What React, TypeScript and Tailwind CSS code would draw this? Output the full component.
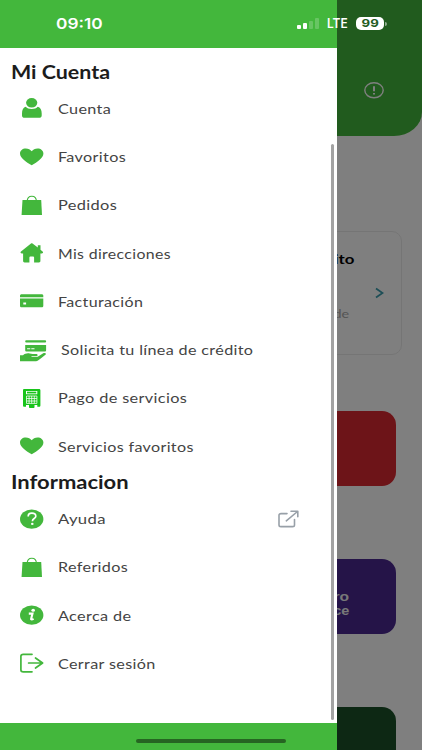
import type { ReactNode } from 'react'

type Item = { label: string; icon: ReactNode; fit: string; indent?: boolean; external?: boolean }

const Icon = ({ children, className = 'text-[#43b73c]' }: { children: ReactNode; className?: string }) => (
  <svg viewBox="0 0 30 24" fill="currentColor" className={`w-[30px] h-6 shrink-0 ${className}`}>
    {children}
  </svg>
)

const person = (
  <Icon>
    <ellipse cx="14.7" cy="6.8" rx="5.6" ry="4.8" />
    <path d="M8.8 10.8C10 12.200 12 13 14.7 13s4.800-.8 6-2.200c2.600.7 4 3.200 4 6.800v1.800c0 1.700-1 2.400-2.800 2.400H7.700C6 21.800 5 21.100 5 19.400v-1.800c0-3.600 1.300-6.100 3.800-6.800z" />
  </Icon>
)

const heart = (
  <Icon>
    <path d="M14.700 20.300C9 16.800 3 13 3 8.400 3 5.500 5.500 3.400 8.800 3.400c2.500 0 4.700 1.100 5.900 2.900 1.200-1.800 3.400-2.900 5.900-2.900 3.200 0 5.800 2.100 5.800 5 0 4.600-6 8.400-11.700 11.900z" />
  </Icon>
)

const bag = (
  <Icon>
    <path d="M5.500 7.100h18.700L25 22H4.600z" />
    <path d="M10.200 8.500C10.200 5 12 3.200 14.800 3.200S19.400 5 19.400 8.500" fill="none" stroke="currentColor" strokeWidth="1.100" />
  </Icon>
)

const home = (
  <Icon>
    <path d="M14 2.600c.5-.4 1-.4 1.500 0l5.300 4V4.200h2.700v4.500l2.100 1.700c.9.800.4 2-.7 2h-1.500v7.700c0 .9-.5 1.400-1.500 1.400h-4.800v-5c0-.6-.3-.9-1-.9h-2.700c-.7 0-1 .3-1 .9v5H7.600c-1 0-1.500-.5-1.500-1.400v-7.700H4.700c-1.100 0-1.600-1.200-.7-2z" />
  </Icon>
)

const card = (
  <Icon>
    <path d="M4.800 5.300h19.700c1.200 0 1.800.5 1.800 1.500v1.400H3V6.800c0-1 .6-1.500 1.800-1.500z" />
    <path fillRule="evenodd" d="M3 9.500h23.300v7.300c0 1-.6 1.500-1.800 1.500H4.800c-1.200 0-1.800-.5-1.800-1.500zm3.300 4v2h2.800v-2z" />
  </Icon>
)

const handCard = (
  <Icon>
    <rect x="8.200" y="2.200" width="20.900" height="2.300" rx="1" />
    <path fillRule="evenodd" d="M8.200 7h20.900v5.300c0 .8-.5 1.200-1.400 1.200H9.600c-.9 0-1.400-.4-1.400-1.200zm1.900 3.200v1h3.200v-1zm4.200 0v1h3.200v-1z" />
    <path d="M3 17.200h3c2-1.600 4.300-2.300 6.700-1.700l2.900.4h3.500c2 0 2.100 2.300 0 2.300h-4.600v.8h5.500c2-.9 4.200-2.500 6.200-3.700 1.900-1 3.700.4 2.200 1.500-2.400 2-5 4-7.400 5.600-1.300.8-2.600.9-4.300.9H3z" />
  </Icon>
)

const terminal = (
  <Icon className="text-[#18c41b]">
    <path fillRule="evenodd" d="M7.400 3h14.500c.9 0 1.500.5 1.500 1.300v15.100c0 .9-.5 1.400-1.500 1.400h-1.600v-1.800H9v1.800H7.400c-.9 0-1.400-.5-1.400-1.400V4.300C6 3.500 6.500 3 7.400 3zM9 4.900V8.300h11.300V4.900z" />
    <rect x="10" y="5.700" width="9.300" height="1.700" />
    <g stroke="#fff" strokeWidth=".75" fill="none">
      <path d="M9.500 10h10.400v7.400H9.500zM12.100 10v7.400M14.700 10v7.400M17.300 10v7.400M9.500 12.500h10.400M9.500 15h10.400" />
    </g>
    <path d="M12 18.700h5.500v2.300c0 .7-.4 1-1.100 1h-3.300c-.7 0-1.100-.3-1.100-1z" />
  </Icon>
)

const help = (
  <Icon>
    <ellipse cx="14.700" cy="12.100" rx="11.700" ry="9.700" />
    <path d="M11.200 9.500c0-2 1.400-3.300 3.700-3.300s3.900 1.200 3.900 3c0 2.400-3.400 2.300-3.400 5" fill="none" stroke="#fff" strokeWidth="1.700" />
    <ellipse cx="15.300" cy="16.900" rx="1.300" ry="1.100" fill="#fff" />
  </Icon>
)

const info = (
  <Icon>
    <ellipse cx="14.700" cy="12.100" rx="11.700" ry="9.700" />
    <ellipse cx="16.200" cy="7.300" rx="1.800" ry="1.500" fill="#fff" />
    <path d="M11.800 10.600h3.700l-1.400 5.300c-.2.800.9.900 2.500 0" fill="none" stroke="#fff" strokeWidth="2.100" />
  </Icon>
)

const logout = (
  <Icon>
    <g fill="none" stroke="currentColor" strokeWidth="1.700" strokeLinecap="round" strokeLinejoin="round">
      <path d="M15 3.300H6.300C4.700 3.300 3.900 4 3.900 5.200v13.700c0 1.200.8 1.900 2.400 1.900H15M11.600 12h14M18.500 7l7.100 5-7.100 5" />
    </g>
  </Icon>
)

const cuenta: Item[] = [
  { label: 'Cuenta', icon: person, fit: 'scale-x-[1.157]' },
  { label: 'Favoritos', icon: heart, fit: 'scale-x-[1.157]' },
  { label: 'Pedidos', icon: bag, fit: 'scale-x-[1.17]' },
  { label: 'Mis direcciones', icon: home, fit: 'scale-x-[1.133]' },
  { label: 'Facturación', icon: card, fit: 'scale-x-[1.145]' },
  { label: 'Solicita tu línea de crédito', icon: handCard, fit: 'scale-x-[1.153]', indent: true },
  { label: 'Pago de servicios', icon: terminal, fit: 'scale-x-[1.165]' },
  { label: 'Servicios favoritos', icon: heart, fit: 'scale-x-[1.15]' },
]

const informacion: Item[] = [
  { label: 'Ayuda', icon: help, fit: 'scale-x-[1.19]', external: true },
  { label: 'Referidos', icon: bag, fit: 'scale-x-[1.155]' },
  { label: 'Acerca de', icon: info, fit: 'scale-x-[1.16]' },
  { label: 'Cerrar sesión', icon: logout, fit: 'scale-x-[1.155]' },
]

function MenuItem({ label, icon, fit, indent, external }: Item) {
  return (
    <li className="flex h-[48.25px] items-center pl-[17px] pr-[38px]">
      {icon}
      <span className={`${indent ? 'ml-[14px]' : 'ml-[11px]'} inline-block origin-left whitespace-nowrap text-[14px] tracking-[0.3px] text-[#444] ${fit}`}>
        {label}
      </span>
      {external && (
        <svg viewBox="0 0 22 18" className="ml-auto h-[18px] w-[22px]" fill="none" stroke="#98a0a8" strokeWidth="1.600" strokeLinecap="round" strokeLinejoin="round">
          <path d="M10 3.600H4C2.700 3.600 2 4.200 2 5.300v9.600c0 1.100.7 1.700 2 1.700h11.500c1.300 0 2-.6 2-1.700V9.500M14 1.300h6.800v5.400M20.500 1.500 9.300 10.800" />
        </svg>
      )}
    </li>
  )
}

function Section({ title, items, fit }: { title: string; items: Item[]; fit: string }) {
  return (
    <section>
      <h2 className="flex h-[24.300px] items-center pl-[10.500px]">
        <span className={`inline-block origin-left whitespace-nowrap text-[18px] font-bold text-[#1c1c1c] ${fit}`}>{title}</span>
      </h2>
      <ul>
        {items.map(item => (
          <MenuItem key={item.label} {...item} />
        ))}
      </ul>
    </section>
  )
}

function HomePage() {
  return (
    <div className="flex h-full flex-col bg-white">
      <header className="flex h-[136px] shrink-0 items-start justify-end rounded-br-[28px_24px] bg-[#43b73c] pr-[37px] pt-[81px]">
        <svg viewBox="0 0 22 18" className="h-[18px] w-[22px]" fill="none" stroke="#fff" strokeWidth="1.400">
          <ellipse cx="11" cy="9.300" rx="9.200" ry="7.500" />
          <path d="M11 5.200v5M11 12v1.600" strokeWidth="2" />
        </svg>
      </header>
      <div className="mr-5 mt-[95px] flex h-[124px] shrink-0 justify-end rounded-[10px] border border-[#ebebeb] pr-[17px]">
        <div className="flex w-[130px] flex-col items-end pr-7 pt-[17px]">
          <span className="inline-block origin-right scale-x-[1.2] text-[14px] font-bold leading-5 text-black">Crédito</span>
          <span className="mr-[5px] mt-[37px] inline-block origin-right scale-x-[1.2] text-[12px] leading-4 text-[#aaa]">de</span>
        </div>
        <svg viewBox="0 0 9 12" className="-ml-[7px] mt-[55px] h-3 w-[9px]" fill="none" stroke="#3a9dad" strokeWidth="1.800">
          <path d="M1 1.500 7.500 6 1 10.500" />
        </svg>
      </div>
      <div className="mr-[26px] mt-[55.500px] h-[75.500px] shrink-0 rounded-[14px] bg-[#da2830]" />
      <div className="mr-[26px] mt-[72.500px] flex h-[75.500px] shrink-0 flex-col items-end rounded-[14px] bg-[#4a2990] pr-[47px] pt-[31px] font-['Liberation_Sans',sans-serif] text-[12px] font-bold leading-[14px] text-[#f0f0f0]">
        <span className="inline-block origin-right scale-x-[1.300]">ro</span>
        <span className="inline-block origin-right scale-x-[1.200]">ce</span>
      </div>
      <div className="mr-[26px] mt-[72.500px] h-[76px] shrink-0 rounded-[14px] bg-[#1b5129]" />
    </div>
  )
}

function StatusBar() {
  return (
    <div className="absolute inset-x-0 top-0 flex h-[47px] items-center pl-[56px] font-['Inter',sans-serif] text-white">
      <span className="inline-block w-[241px] pt-px text-[15px] font-semibold">
        <span className="inline-block origin-left scale-x-[1.15]">09:10</span>
      </span>
      <div className="flex h-[11px] items-end gap-[2px]">
        <i className="h-1 w-1 rounded-[1px] bg-white" />
        <i className="h-[6px] w-1 rounded-[1px] bg-white" />
        <i className="h-2 w-1 rounded-[1px] bg-white/20" />
        <i className="h-[11px] w-1 rounded-[1px] bg-white/20" />
      </div>
      <span className="ml-2 inline-block w-[29px] pt-px text-[12.500px] font-semibold">
        <span className="inline-block origin-left scale-x-[0.95]">LTE</span>
      </span>
      <span className="flex h-[13px] w-7 items-center justify-center rounded-[5px] bg-white text-[11px] font-bold text-[#225c1f]">
        <span className="scale-x-[1.2]">99</span>
      </span>
      <i className="ml-px h-1 w-[1.500px] rounded-r bg-white/50" />
    </div>
  )
}

export default function App() {
  return (
    <div className="relative h-[750px] w-[422px] overflow-hidden font-['Lato',sans-serif]">
      <HomePage />
      <div className="absolute inset-0 bg-black/50" />
      <aside className="absolute inset-y-0 left-0 flex w-[337.400px] flex-col bg-white">
        <div className="h-[47.500px] shrink-0 bg-[#43b73c]" />
        <nav className="relative flex-1 pt-[12.500px]">
          <Section title="Mi Cuenta" items={cuenta} fit="scale-x-[1.19]" />
          <Section title="Informacion" items={informacion} fit="scale-x-[1.22]" />
          <div className="absolute right-[3px] top-[96.500px] h-[576px] w-[3px] rounded-full bg-[#a3a3a3]" />
        </nav>
        <div className="h-[27.500px] shrink-0 bg-[#43b73c]" />
      </aside>
      <StatusBar />
      <div className="absolute bottom-[7px] left-[136px] h-1 w-[150px] rounded-full bg-[#266522]" />
    </div>
  )
}
